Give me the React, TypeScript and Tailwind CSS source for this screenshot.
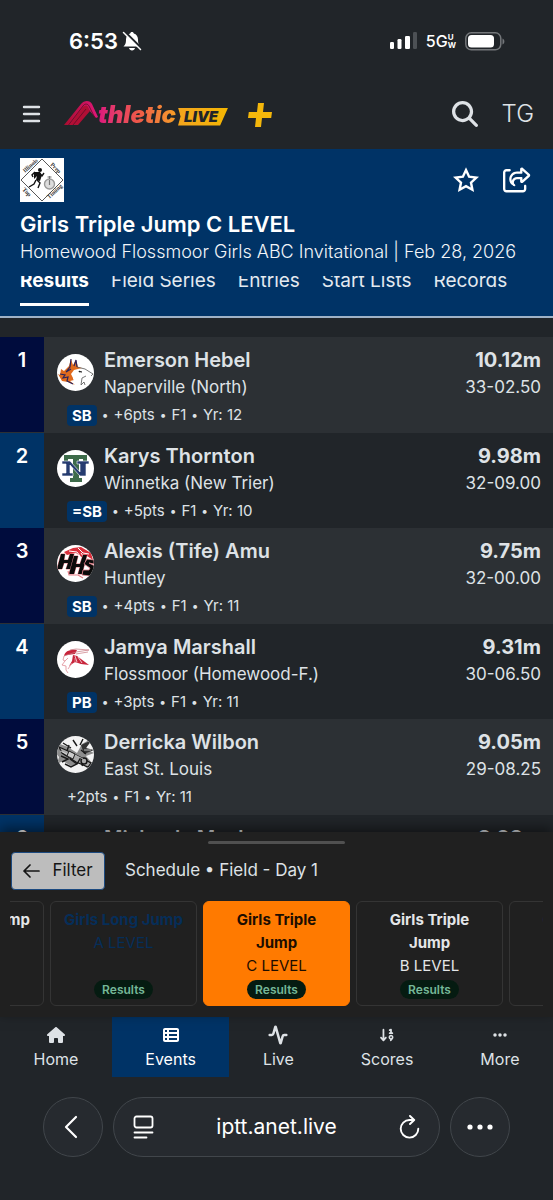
import type { ReactNode } from "react";
import { Activity, ChevronLeft } from "lucide-react";
import {
  FaArrowDown19,
  FaEllipsis,
  FaHouse,
  FaMagnifyingGlass,
  FaRegShareFromSquare,
  FaTableList,
} from "react-icons/fa6";

type Result = {
  place: number;
  name: string;
  school: string;
  badge?: string;
  points: number;
  year: number;
  mark: string;
  imperial: string;
  logo: ReactNode;
};

type EventCard = {
  id: number;
  name: string;
  level: string;
  state: "default" | "visited" | "active";
};

function HuskyLogo() {
  return (
    <svg viewBox="0 0 37 37" className="size-[37px]" aria-hidden="true">
      <circle cx="18.5" cy="18.5" r="18.5" fill="#fff" />
      <path d="m12 12 2-7 2 6 3-5 2 7 4 1-8 2-3 4 3 6-4 1 5 4-7-3-6-1-4-7 2 1 1-6 3 2Z" fill="#e06a1c" />
      <path d="m14 5-1 8-4 5 5-3m3-3 2-6 1 7M3 20l5 1-2 3 5-1-1 4 6 3" fill="none" stroke="#29235c" strokeWidth="1.2" />
      <path d="m16 20 4-4 9-1 6 5v4l-5-2-7 1-3 6-4-4Z" fill="#fff" />
      <path d="m20 13 8 2 8 5-2 2m-5 0-4 2-1 7 3-3 1 3" fill="none" stroke="#555" strokeWidth=".8" />
      <path d="m22 17 3 1-3 0Z" fill="#111" stroke="#111" strokeWidth=".6" />
    </svg>
  );
}

function TrevianLogo() {
  return (
    <svg viewBox="0 0 37 37" className="size-[37px]" aria-hidden="true">
      <circle cx="18.5" cy="18.5" r="18.5" fill="#fff" />
      <path d="M7 5h23v7h-4V9h-4v19h3v4H13v-4h3V9h-5v3H7Z" fill="#3d6b4a" />
      <path d="M5 11h8l10 11v-8h-3v-3h12v3h-3v12h-6L13 15v8h3v3H5v-3h4v-9H5Z" fill="#263c70" stroke="#fff" strokeWidth=".6" />
    </svg>
  );
}

function HuntleyLogo() {
  return (
    <svg viewBox="0 0 37 37" className="size-[37px]" aria-hidden="true">
      <defs>
        <clipPath id="huntley-disc">
          <circle cx="18.5" cy="18.5" r="18.5" />
        </clipPath>
      </defs>
      <g clipPath="url(#huntley-disc)">
        <path fill="#fff" d="M0 0h37v37H0z" />
        <path d="M7 7 16 3l8-1 10 6 2 7-6-4-4 2-7-5-9 2Z" fill="#d92f3c" />
        <path d="m12 6 8 1 3 4m-2-8 5 5 6 1m-8-1 4 6" fill="none" stroke="#fff" strokeWidth="1" />
        <path d="M4 9h4L7 15h4l2-6h4l-4 15H9l2-6H7l-2 6H0Zm13 2h4l-2 8h4l3-9h4l-5 19h-4l2-7h-4l-2 7h-5Z" fill="#0b0b0b" stroke="#e5828b" strokeWidth="1" paintOrder="stroke" />
        <path d="m37 15-7-1-3 5 6 4-1 2h-6l-1 5 8 1 4-4 1-6-6-3 5 1Z" fill="#0b0b0b" stroke="#e5828b" strokeWidth=".8" />
        <path d="m11 26 1 4h9l5 3" fill="none" stroke="#e5828b" strokeWidth="1.2" />
      </g>
    </svg>
  );
}

function VikingLogo() {
  return (
    <svg viewBox="0 0 37 37" className="size-[37px]" aria-hidden="true">
      <circle cx="18.5" cy="18.5" r="18.5" fill="#fff" />
      <path d="M7 15c1-5 6-7 13-6l-2 4-8 1Z" fill="#c8243b" />
      <path d="m16 14 4 1 4 3 8 6-8-1-6-2-6 4 3-5Z" fill="#c8243b" />
      <path d="m7 15-1 4 2 1-3 4 4 1 0 4 2 3m0-15-3 3m7 2-4 6m7-11 0 5" fill="none" stroke="#e08b94" strokeWidth=".8" />
      <path d="m18 15 2 6m1-5 4 6" fill="none" stroke="#fff" strokeWidth=".7" />
      <path d="m7 15 12-4 13-2M13 9l6-1 13 1m-13 4 12-2" fill="none" stroke="#c7777f" strokeWidth=".7" />
    </svg>
  );
}

function FlyerLogo() {
  return (
    <svg viewBox="0 0 37 37" className="size-[37px]" aria-hidden="true">
      <defs>
        <clipPath id="flyer-disc">
          <circle cx="18.5" cy="18.5" r="18.5" />
        </clipPath>
      </defs>
      <g clipPath="url(#flyer-disc)">
        <path fill="#f3f3f3" d="M0 0h37v37H0z" />
        <path d="m3 8 8 3 9 6 5-9 7-4-3 9 8 4-8 3 6 7-5 5-7-5-9 3-8-5-6 3 2-7-4-5Z" fill="#8c8c8c" />
        <path d="m2 11 9 4 10 5 13 7-3 4-12-5-14-9Z" fill="#aaa" stroke="#151515" strokeWidth="1.2" />
        <path d="M24 9 35 4l-6 8 8 2-10 4Z" fill="#333" />
        <path d="m4 20 7 3-6 3m8-3 7 5-6 3-6-3m16-14 5 4m-17-9-2 6m14 6-4 7m8-5-3 7M6 7l8 5m2-8 4 6m6-7-3 6" fill="none" stroke="#181818" strokeWidth="1.4" />
        <path d="m12 15 6 3-2 5-6-3Z" fill="#ccc" stroke="#222" />
        <circle cx="27" cy="25" r="3" fill="#aaa" stroke="#111" strokeWidth="1.4" />
        <path d="m18 19 8 4M3 15l7 3M27 14l7 0" stroke="#ddd" strokeWidth=".8" />
      </g>
    </svg>
  );
}

function MeetLogo() {
  return (
    <svg viewBox="0 0 44 44" className="size-11" role="img" aria-label="Illinois Prep Top Timing">
      <path fill="#fff" d="M0 0h44v44H0z" />
      <path d="M22 1 43 22 22 43 1 22Z" fill="none" stroke="#444" strokeWidth=".9" />
      <g fontFamily="Liberation Serif" fontSize="6" fontWeight="bold" fill="#333">
        <text transform="translate(5 15) rotate(-42)">Illinois</text>
        <text transform="translate(30 7) rotate(45)">Prep</text>
        <text transform="translate(2 32) rotate(45)">Top</text>
        <text transform="translate(29 41) rotate(-42)">Timing</text>
      </g>
      <circle cx="20" cy="12" r="2" fill="#111" />
      <path d="m14 14 6 0 2 3-2 6-4-1 1-4-3 3Z" fill="#111" />
      <path d="m19 15 3 3 2-3m-9-1-3 3 1 2m3 3-2 4-5 3m8-7 3 3-2 5" fill="none" stroke="#111" strokeWidth="1.4" />
      <circle cx="29.5" cy="26" r="5" fill="#ddd" stroke="#999" strokeWidth="1.4" />
      <path d="M29.5 18v3m0 1v5m-2-8h4" stroke="#777" strokeWidth="1.2" />
    </svg>
  );
}

const results: Result[] = [
  { place: 1, name: "Emerson Hebel", school: "Naperville (North)", badge: "SB", points: 6, year: 12, mark: "10.12m", imperial: "33-02.50", logo: <HuskyLogo /> },
  { place: 2, name: "Karys Thornton", school: "Winnetka (New Trier)", badge: "=SB", points: 5, year: 10, mark: "9.98m", imperial: "32-09.00", logo: <TrevianLogo /> },
  { place: 3, name: "Alexis (Tife) Amu", school: "Huntley", badge: "SB", points: 4, year: 11, mark: "9.75m", imperial: "32-00.00", logo: <HuntleyLogo /> },
  { place: 4, name: "Jamya Marshall", school: "Flossmoor (Homewood-F.)", badge: "PB", points: 3, year: 11, mark: "9.31m", imperial: "30-06.50", logo: <VikingLogo /> },
  { place: 5, name: "Derricka Wilbon", school: "East St. Louis", points: 2, year: 11, mark: "9.05m", imperial: "29-08.25", logo: <FlyerLogo /> },
  { place: 6, name: "Michaela Mack", school: "East St. Louis", points: 1, year: 11, mark: "8.98m", imperial: "29-05.50", logo: <FlyerLogo /> },
];

const eventCards: EventCard[] = [
  { id: 1, name: "Girls Long Jump", level: "B LEVEL", state: "default" },
  { id: 2, name: "Girls Long Jump", level: "A LEVEL", state: "visited" },
  { id: 3, name: "Girls Triple Jump", level: "C LEVEL", state: "active" },
  { id: 4, name: "Girls Triple Jump", level: "B LEVEL", state: "default" },
  { id: 5, name: "Girls Triple Jump", level: "A LEVEL", state: "default" },
];

const cardStyles = {
  default: "border-[#343434] text-[#e4e6e8]",
  visited: "border-[#343434] text-[#062e59]",
  active: "border-[#ff7a00] bg-[#ff7a00] text-[#1c0d00]",
};

const tabs = ["Results", "Field Series", "Entries", "Start Lists", "Records"];

const navItems = [
  { label: "Home", icon: <FaHouse className="size-[18px]" /> },
  { label: "Events", icon: <FaTableList className="size-4" /> },
  { label: "Live", icon: <Activity className="size-5" strokeWidth={3} /> },
  { label: "Scores", icon: <FaArrowDown19 className="size-4" /> },
  { label: "More", icon: <FaEllipsis className="size-4" /> },
];

function StatusBar() {
  return (
    <div className="flex h-[82px] items-center justify-between pr-12 pl-[69px] text-white">
      <div className="flex items-center gap-1">
        <span className="text-[22px] font-semibold">6:53</span>
        <svg viewBox="0 0 20 20" className="size-5" aria-hidden="true">
          <path d="M10 1c1 0 1.700.7 1.800 1.500C14.500 3.300 16 5.500 16 8.500c0 4 .7 5 2.500 7H1.500C3.300 13.500 4 12.500 4 8.500c0-3 1.500-5.200 4.200-6C8.300 1.700 9 1 10 1Z" fill="#fff" />
          <path d="M7 17h6c-.3 1.500-1.500 2.500-3 2.500S7.300 18.500 7 17Z" fill="#fff" />
          <path d="m2.500.5 17 17" stroke="#212529" strokeWidth="2.4" />
          <path d="m1.500 1.500 17 17" stroke="#fff" strokeWidth="1.5" strokeLinecap="round" />
        </svg>
      </div>
      <div className="flex items-center gap-[9px]">
        <svg viewBox="0 0 27 18" className="h-[18px] w-[27px]" fill="#fff" aria-hidden="true">
          <rect x="0" y="10" width="4" height="7" rx="1.2" />
          <rect x="7.5" y="7" width="4" height="10" rx="1.2" />
          <rect x="15" y="4" width="5" height="13" rx="1.2" />
          <rect x="23" y="0" width="4" height="17" rx="1.2" fill="#4d5155" />
        </svg>
        <div className="flex items-center font-medium">
          <span className="text-base">5G</span>
          <span className="text-[8px] leading-2 font-bold">
            U<br />W
          </span>
        </div>
        <svg viewBox="0 0 40 19" className="h-[19px] w-10" aria-hidden="true">
          <rect x=".8" y=".8" width="35" height="17" rx="5.5" fill="none" stroke="#74777a" strokeWidth="1.5" />
          <rect x="3" y="3" width="26" height="12.6" rx="3.5" fill="#fff" />
          <path d="M37.500 6.500c2.500 1 2.500 5 0 6Z" fill="#74777a" />
        </svg>
      </div>
    </div>
  );
}

function Brand() {
  return (
    <a href="#" className="flex items-center" aria-label="AthleticLIVE">
      <svg viewBox="0 0 34 25" className="h-[25px] w-[34px]" aria-hidden="true">
        <defs>
          <linearGradient id="brand-a" x1="0" x2="1">
            <stop offset="0" stopColor="#a80d2d" />
            <stop offset="1" stopColor="#e0177b" />
          </linearGradient>
        </defs>
        <path d="M0 24 17 3c3-4 9-4 11 0l6 13-2 1-7-8L13 24Z" fill="url(#brand-a)" />
        <path d="M5 24 19 6c2-2 4-2 5 0l2 4L14 24Z" fill="#b00f35" />
        <path d="M4.500 24 19 5c2-3 5-2 6 0l6 12M9 24 22 8" fill="none" stroke="#5a0c26" strokeWidth=".8" />
      </svg>
      <span className="mt-0.5 bg-linear-to-r from-[#dc127c] via-[#ee5748] to-[#f5a01d] bg-clip-text pr-0.5 text-[24px] leading-7 font-black text-transparent italic">
        thletic
      </span>
      <span className="mt-1.5 bg-linear-to-r from-[#f3a51c] to-[#f4b600] pr-2.5 pl-1.5 text-[15px] leading-[18px] font-black text-[#212529] italic [clip-path:polygon(0_0,100%_0,84%_100%,0_100%,5%_50%)]">
        LIVE
      </span>
    </a>
  );
}

function Navbar() {
  return (
    <div className="flex h-[67px] items-center pr-[19px] pb-1 pl-[22px]">
      <button type="button" aria-label="Menu">
        <svg viewBox="0 0 19 18" className="h-[18px] w-[19px]" stroke="#dee2e6" strokeWidth="2.4" strokeLinecap="round" aria-hidden="true">
          <path d="M2 2h15M2 9h15M2 16h15" />
        </svg>
      </button>
      <div className="ml-[23px]">
        <Brand />
      </div>
      <button type="button" aria-label="Add" className="mt-0.5 ml-5">
        <svg viewBox="0 0 24 24" className="size-6" fill="#f4b70b" aria-hidden="true">
          <path d="M10 0h6l-1 9h9l-.8 6H14l-1 9H7l1-9H0l.8-6H9Z" />
        </svg>
      </button>
      <button type="button" aria-label="Search" className="ml-auto text-[#dee2e6]">
        <FaMagnifyingGlass className="size-[26px]" />
      </button>
      <button type="button" className="ml-6 text-[24px] font-light text-[#dee2e6]">
        TG
      </button>
    </div>
  );
}

function EventHeader() {
  return (
    <header className="border-b-2 border-[#9fb2c6] bg-[#003366] px-5 pt-[9px] pb-2.5 text-white">
      <div className="flex items-center justify-between">
        <MeetLogo />
        <div className="flex items-center gap-6">
          <button type="button" aria-label="Favorite">
            <svg viewBox="0 0 26 26" className="size-[26px]" fill="none" stroke="#fff" strokeWidth="2.4" aria-hidden="true">
              <path d="m13 3 3.100 6.700 7.300.9-5.400 5 1.400 7.200L13 19.200l-6.400 3.600L8 15.600l-5.400-5 7.300-.9Z" />
            </svg>
          </button>
          <button type="button" aria-label="Share" className="mr-0.5">
            <FaRegShareFromSquare className="size-7" />
          </button>
        </div>
      </div>
      <h1 className="mt-1.5 text-[22px] leading-8 font-semibold">Girls Triple Jump C LEVEL</h1>
      <p className="text-lg leading-6 font-light text-[#f1f5f9]">Homewood Flossmoor Girls ABC Invitational | Feb 28, 2026</p>
      <nav className="mt-3 flex h-[30px] items-end gap-[22px] overflow-hidden">
        {tabs.map((tab, index) => (
          <a
            key={tab}
            href="#"
            className={
              index === 0
                ? "shrink-0 border-b-3 border-white pb-2 text-[19px] leading-7 font-bold"
                : "shrink-0 border-b-3 border-transparent pb-2 text-[19px] leading-7 text-[#e4eaf0]"
            }
          >
            {tab}
          </a>
        ))}
      </nav>
    </header>
  );
}

function ResultsTable() {
  return (
    <table className="mt-[19px] w-full text-[#dee2e6]">
      <tbody>
        {results.map((result) => (
          <tr key={result.place} className="group border-[#2c3034] align-top odd:border-b odd:bg-[#2c3034]">
            <th scope="row" className="w-11 bg-[#003366] pt-2 text-[20px] leading-[30px] font-semibold text-white group-odd:bg-[#000c3d]">
              {result.place}
            </th>
            <td className="pt-2 pb-[5px] pl-[13px]">
              <div className="flex items-center gap-2.5">
                {result.logo}
                <div>
                  <p className="text-[20px] leading-[30px] font-semibold">{result.name}</p>
                  <p className="text-[17px] leading-6">{result.school}</p>
                </div>
              </div>
              <div className="mt-1 flex h-6 items-center gap-[5px] pl-2.5 text-[15px]">
                {result.badge && (
                  <>
                    <span className="rounded bg-[#003366] px-[5px] leading-[21px] font-bold text-white">{result.badge}</span>
                    <span className="text-xs">•</span>
                  </>
                )}
                <span>+{result.points}pts</span>
                <span className="text-xs">•</span>
                <span>F1</span>
                <span className="text-xs">•</span>
                <span>Yr: {result.year}</span>
              </div>
            </td>
            <td className="pt-2 pr-3 text-right">
              <p className="text-[20px] leading-[30px] font-bold">{result.mark}</p>
              <p className="text-[17px] leading-6">{result.imperial}</p>
            </td>
          </tr>
        ))}
      </tbody>
    </table>
  );
}

function ScheduleSheet() {
  return (
    <section className="relative bg-[#202020] px-2.5 pt-[9px] pb-[11px] shadow-[0_-4px_12px_rgba(0,0,0,0.5)]">
      <div className="mx-auto h-[3px] w-[137px] rounded-full bg-[#505050]" />
      <div className="mt-2 flex items-center pl-px">
        <button
          type="button"
          className="flex h-[38px] w-[94px] items-center justify-center gap-3 rounded border border-[#1c4a80] bg-[#bdbdbd] text-[17px] text-[#151515]"
        >
          <svg viewBox="0 0 17 14" className="h-3.5 w-[17px]" fill="none" stroke="#151515" strokeWidth="1.7" strokeLinecap="round" strokeLinejoin="round" aria-hidden="true">
            <path d="M16 7H1m6-6L1 7l6 6" />
          </svg>
          Filter
        </button>
        <h2 className="ml-5 text-[17px] text-[#dee2e6]">Schedule • Field - Day 1</h2>
      </div>
      <div className="mt-[11px] flex justify-center gap-1.5 overflow-hidden">
        {eventCards.map((card) => (
          <a
            key={card.id}
            href="#"
            className={`flex h-[105px] w-[147px] shrink-0 flex-col items-center rounded-md border px-3 pt-1.5 pb-1.5 text-center text-[15px] leading-[23px] ${cardStyles[card.state]}`}
          >
            <span className="font-bold">{card.name}</span>
            <span>{card.level}</span>
            <span className="mt-auto rounded-full bg-[#051b11] px-2 text-xs leading-[19px] font-semibold text-[#75b798]">Results</span>
          </a>
        ))}
      </div>
    </section>
  );
}

function BottomNav() {
  return (
    <nav className="flex h-[60px] text-[#dee2e6]">
      {navItems.map((item) => (
        <a
          key={item.label}
          href="#"
          className={
            item.label === "Events"
              ? "flex flex-auto flex-col items-center bg-[#003366] pt-2 text-white"
              : "flex flex-auto flex-col items-center pt-2"
          }
        >
          <span className="flex h-5 items-center">{item.icon}</span>
          <span className="mt-0.5 text-base">{item.label}</span>
        </a>
      ))}
    </nav>
  );
}

function BrowserBar() {
  return (
    <div className="flex gap-2.5 px-[43px] pt-5 pb-[43px] text-white">
      <button type="button" aria-label="Back" className="flex size-[60px] items-center justify-center rounded-full border border-[#41464b] bg-[#262a2f]">
        <ChevronLeft className="mr-1 size-10" strokeWidth={1.3} />
      </button>
      <div className="flex h-[60px] flex-1 items-center justify-between rounded-full border border-[#41464b] bg-[#262a2f] px-[19px]">
        <button type="button" aria-label="Page menu">
          <svg viewBox="0 0 21 24" className="h-6 w-[21px]" fill="none" stroke="#fff" strokeWidth="1.8" strokeLinecap="round" aria-hidden="true">
            <rect x="1.5" y="1.5" width="18" height="11" rx="2" />
            <path d="M1.500 17.500h18m-18 5h12" />
          </svg>
        </button>
        <span className="text-[21px]">iptt.anet.live</span>
        <button type="button" aria-label="Reload">
          <svg viewBox="0 0 21 24" className="h-6 w-[21px]" fill="none" stroke="#fff" strokeWidth="1.9" strokeLinecap="round" strokeLinejoin="round" aria-hidden="true">
            <path d="M10.500 5a8.800 8.800 0 1 0 8.800 8.800" />
            <path d="M10.500 5h4M11 1l4.200 4L11 9" />
          </svg>
        </button>
      </div>
      <button type="button" aria-label="More" className="flex size-[60px] items-center justify-center rounded-full border border-[#41464b] bg-[#262a2f]">
        <svg viewBox="0 0 26 6" className="h-1.5 w-[26px]" fill="#fff" aria-hidden="true">
          <circle cx="3" cy="3" r="2.6" />
          <circle cx="13" cy="3" r="2.6" />
          <circle cx="23" cy="3" r="2.6" />
        </svg>
      </button>
    </div>
  );
}

export default function App() {
  return (
    <div className="flex h-screen flex-col bg-[#212529] font-[Inter,sans-serif]">
      <StatusBar />
      <Navbar />
      <EventHeader />
      <main className="min-h-0 flex-1 overflow-hidden">
        <ResultsTable />
      </main>
      <ScheduleSheet />
      <BottomNav />
      <BrowserBar />
    </div>
  );
}
